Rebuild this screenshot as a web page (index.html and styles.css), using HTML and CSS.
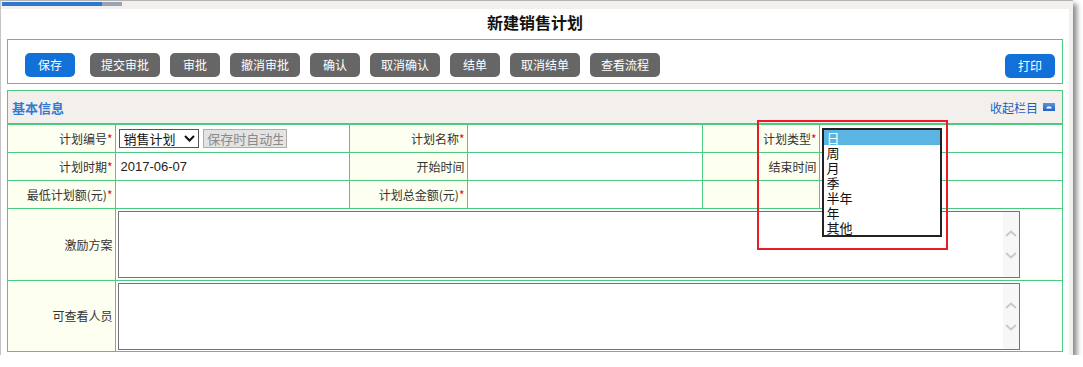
FILE: index.html
```html
<!DOCTYPE html>
<html lang="zh-CN">
<head>
  <meta charset="UTF-8">
  <title>新建销售计划</title>
  <link rel="stylesheet" href="styles.css">
</head>
<body>
  <div class="sales-window">
    <div class="sales-progress"><div class="sales-progress-fill"></div></div>
    <div class="sales-panel">
      <h1 class="sales-title">新建销售计划</h1>

      <div class="sales-toolbar">
        <div class="sales-toolbar-left">
          <button class="sales-btn sales-btn-blue sales-btn-save" type="button">保存</button>
          <button class="sales-btn" type="button">提交审批</button>
          <button class="sales-btn" type="button">审批</button>
          <button class="sales-btn" type="button">撤消审批</button>
          <button class="sales-btn" type="button">确认</button>
          <button class="sales-btn" type="button">取消确认</button>
          <button class="sales-btn" type="button">结单</button>
          <button class="sales-btn" type="button">取消结单</button>
          <button class="sales-btn" type="button">查看流程</button>
        </div>
        <button class="sales-btn sales-btn-blue sales-btn-print" type="button">打印</button>
      </div>

      <div class="sales-section">
        <div class="sales-section-head">
          <span class="sales-section-title">基本信息</span>
          <a class="sales-collapse" href="#">收起栏目
            <svg class="sales-collapse-icon" width="12" height="8" viewBox="0 0 12 8">
              <defs>
                <linearGradient id="collapseGrad" x1="0" y1="0" x2="0" y2="1">
                  <stop offset="0" stop-color="#5b93e0"/>
                  <stop offset="1" stop-color="#2462c4"/>
                </linearGradient>
              </defs>
              <rect x="0" y="0" width="12" height="8" fill="url(#collapseGrad)"/>
              <path d="M3 5.5 L4.5 3.5 L7.5 3.5 L9 5.5 Z" fill="#fff"/>
            </svg>
          </a>
        </div>

        <table class="sales-form">
          <colgroup>
            <col style="width:107px">
            <col style="width:234px">
            <col style="width:118px">
            <col style="width:235px">
            <col style="width:117px">
            <col>
          </colgroup>
          <tr class="sales-row">
            <td class="sales-label">计划编号<span class="sales-req">*</span></td>
            <td class="sales-value">
              <span class="sales-select-wrap">
                <select class="sales-select">
                  <option>销售计划</option>
                </select>
                <svg class="sales-select-arrow" width="11" height="7" viewBox="0 0 11 7">
                  <path d="M1 1 L5.5 5.5 L10 1" fill="none" stroke="#111" stroke-width="2"/>
                </svg>
              </span>
              <input class="sales-auto" type="text" value="保存时自动生成" readonly>
            </td>
            <td class="sales-label">计划名称<span class="sales-req">*</span></td>
            <td class="sales-value"></td>
            <td class="sales-label">计划类型<span class="sales-req">*</span></td>
            <td class="sales-value sales-type-cell">
              <ul class="sales-listbox">
                <li class="is-selected">日</li>
                <li>周</li>
                <li>月</li>
                <li>季</li>
                <li>半年</li>
                <li>年</li>
                <li>其他</li>
              </ul>
            </td>
          </tr>
          <tr class="sales-row">
            <td class="sales-label">计划时期<span class="sales-req">*</span></td>
            <td class="sales-value"><span class="sales-date">2017-06-07</span></td>
            <td class="sales-label">开始时间</td>
            <td class="sales-value"></td>
            <td class="sales-label">结束时间</td>
            <td class="sales-value"></td>
          </tr>
          <tr class="sales-row">
            <td class="sales-label">最低计划额(元)<span class="sales-req">*</span></td>
            <td class="sales-value"></td>
            <td class="sales-label">计划总金额(元)<span class="sales-req">*</span></td>
            <td class="sales-value"></td>
            <td class="sales-label"></td>
            <td class="sales-value"></td>
          </tr>
          <tr class="sales-row-tall">
            <td class="sales-label">激励方案</td>
            <td class="sales-value sales-area-cell" colspan="5">
              <div class="sales-area">
                <textarea class="sales-area-input"></textarea>
                <div class="sales-scroll">
                  <svg width="12" height="7" viewBox="0 0 12 7"><path d="M1 6 L6 1.5 L11 6" fill="none" stroke="#c9c9c9" stroke-width="2"/></svg>
                  <svg width="12" height="7" viewBox="0 0 12 7"><path d="M1 1 L6 5.5 L11 1" fill="none" stroke="#c9c9c9" stroke-width="2"/></svg>
                </div>
              </div>
            </td>
          </tr>
          <tr class="sales-row-tall sales-row-last">
            <td class="sales-label">可查看人员</td>
            <td class="sales-value sales-area-cell" colspan="5">
              <div class="sales-area">
                <textarea class="sales-area-input"></textarea>
                <div class="sales-scroll">
                  <svg width="12" height="7" viewBox="0 0 12 7"><path d="M1 6 L6 1.5 L11 6" fill="none" stroke="#c9c9c9" stroke-width="2"/></svg>
                  <svg width="12" height="7" viewBox="0 0 12 7"><path d="M1 1 L6 5.5 L11 1" fill="none" stroke="#c9c9c9" stroke-width="2"/></svg>
                </div>
              </div>
            </td>
          </tr>
        </table>
      </div>
    </div>
    <div class="sales-annotation"></div>
  </div>
</body>
</html>
```

FILE: styles.css
```css
body {
  margin: 0;
  background: #fff;
  font-family: "Noto Sans CJK SC", "Liberation Sans", sans-serif;
  font-size: 12px;
  color: #333;
}
.sales-window {
  position: relative;
  box-sizing: border-box;
  width: 1073px;
  height: 355px;
  border-top: 1px solid #b4b4b4;
  border-left: 1px solid #c4c4c4;
  background: #f2efec;
  box-shadow: 4px 4px 5px rgba(0,0,0,0.45);
  display: flex;
  flex-direction: column;
}
.sales-progress {
  width: 120px;
  height: 4px;
  margin: 1px 0 3px 1px;
  background: #98a3b3;
}
.sales-progress-fill {
  width: 100px;
  height: 4px;
  background: #2f78d2;
}
.sales-panel {
  flex: 1;
  margin-right: 4px;
  padding: 0 6px;
  background: #fff;
}
.sales-title {
  margin: 0 0 4px;
  height: 26px;
  line-height: 26px;
  text-align: center;
  font-size: 16px;
  font-weight: bold;
  color: #111;
}
.sales-toolbar {
  box-sizing: border-box;
  height: 45px;
  border: 1px solid #4ccb80;
  padding: 13px 7px 0 17px;
  display: flex;
  justify-content: space-between;
  align-items: flex-start;
}
.sales-toolbar-left {
  display: flex;
  gap: 10px;
}
.sales-btn {
  height: 24px;
  min-width: 50px;
  padding: 0 11px;
  border: none;
  border-radius: 5px;
  background: #666;
  color: #fff;
  font-family: inherit;
  font-size: 12px;
  line-height: 24px;
  cursor: pointer;
}
.sales-btn-blue {
  background: #1171d8;
}
.sales-btn-save {
  margin-right: 5px;
}
.sales-btn-print {
  margin-top: 1px;
}
.sales-section {
  margin-top: 6px;
  border: 1px solid #4ccb80;
}
.sales-section-head {
  height: 32px;
  padding: 0 7px 0 4px;
  background: #f2efec;
  border-bottom: 2px solid #4ccb80;
  display: flex;
  align-items: center;
  justify-content: space-between;
}
.sales-section-title {
  font-size: 13px;
  font-weight: bold;
  color: #2f7ad3;
}
.sales-collapse {
  color: #1d5fbf;
  text-decoration: none;
  display: flex;
  align-items: center;
  gap: 5px;
}
.sales-form {
  width: 100%;
  table-layout: fixed;
  border-collapse: collapse;
  border-style: hidden;
}
.sales-form td {
  border: 1px solid #4ccb80;
  padding: 0;
  line-height: 16px;
}
.sales-row td {
  height: 27px;
}
.sales-row-tall td {
  height: 69px;
}
.sales-row-last td {
  height: 68px;
}
.sales-label {
  background: #fdfff0;
  text-align: right;
  padding-right: 2px !important;
  color: #333;
  white-space: nowrap;
}
.sales-req {
  color: #f00;
}
.sales-value {
  background: #fff;
  padding-left: 3px !important;
  white-space: nowrap;
}
.sales-select-wrap {
  position: relative;
  display: inline-block;
  vertical-align: middle;
}
.sales-select {
  appearance: none;
  box-sizing: border-box;
  width: 80px;
  height: 19px;
  padding: 0 0 0 4px;
  border: 1px solid #555;
  background: #fff;
  font-family: inherit;
  font-size: 13px;
  line-height: 17px;
  color: #111;
  vertical-align: top;
}
.sales-select-arrow {
  position: absolute;
  right: 4px;
  top: 6px;
}
.sales-auto {
  box-sizing: border-box;
  width: 84px;
  height: 19px;
  margin-left: 2px;
  padding: 0 3px;
  vertical-align: middle;
  border: 1px solid #adadad;
  background: #e3e3e3;
  color: #8a8a8a;
  font-family: inherit;
  font-size: 13px;
  outline: none;
}
.sales-date {
  padding-left: 2px;
  font-family: "Liberation Sans", Arial, sans-serif;
  font-size: 13px;
  color: #222;
}
.sales-type-cell {
  position: relative;
}
.sales-listbox {
  position: absolute;
  z-index: 2;
  left: 2px;
  top: 3px;
  width: 120px;
  margin: 0;
  padding: 0;
  list-style: none;
  box-sizing: border-box;
  border: 2px solid #222;
  background: #fff;
}
.sales-listbox li {
  height: 15px;
  line-height: 15px;
  padding-left: 3px;
  font-size: 13px;
  color: #111;
}
.sales-listbox li.is-selected {
  background: #5bb4e2;
  color: #fff;
}
.sales-area-cell {
  padding: 2px 0 0 2px !important;
  vertical-align: top;
}
.sales-area {
  box-sizing: border-box;
  width: 902px;
  height: 67px;
  border: 1px solid #737373;
  display: flex;
}
.sales-area-input {
  flex: 1;
  min-height: 0;
  border: none;
  resize: none;
  outline: none;
  padding: 2px;
  font-family: inherit;
}
.sales-scroll {
  width: 16px;
  background: #f7f7f7;
  display: flex;
  flex-direction: column;
  align-items: center;
  justify-content: center;
  gap: 15px;
}
.sales-annotation {
  position: absolute;
  left: 756px;
  top: 119px;
  width: 191px;
  height: 130px;
  box-sizing: border-box;
  border: 2px solid #ea1d26;
  pointer-events: none;
}
```
